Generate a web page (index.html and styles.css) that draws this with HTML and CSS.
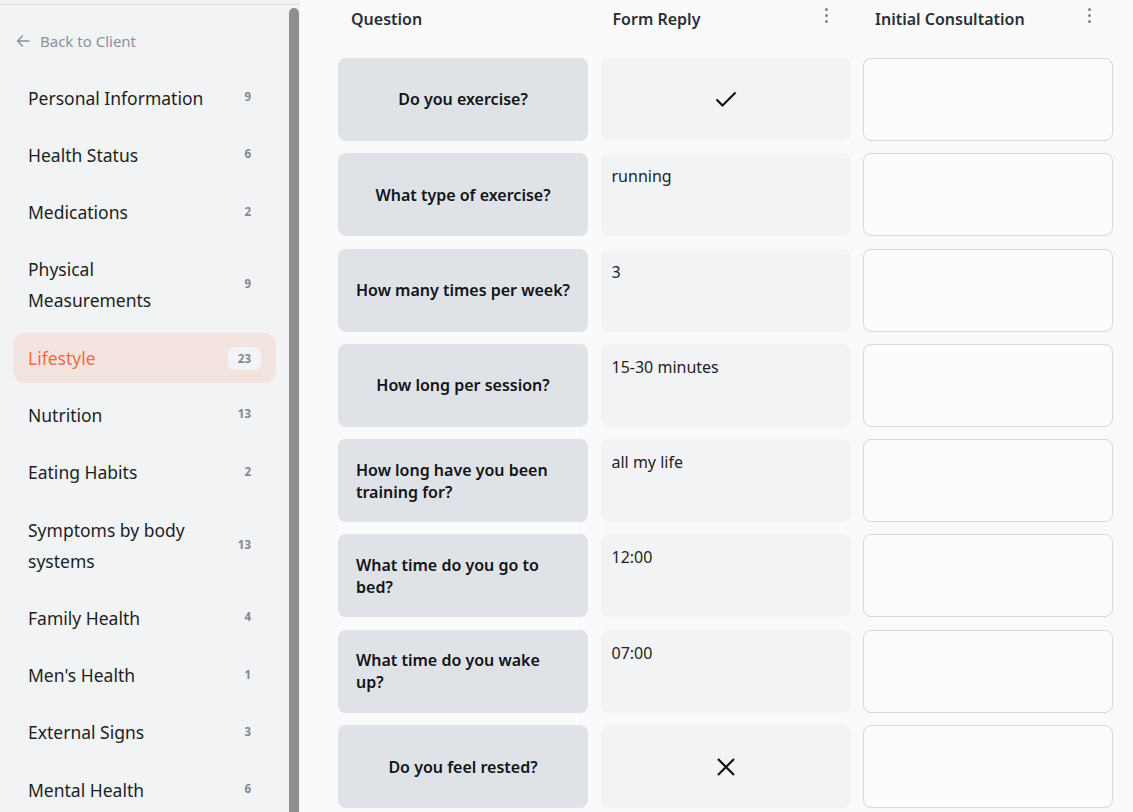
FILE: index.html
```html
<!DOCTYPE html>
<html>
  <head>
    <title>Lifestyle</title>
    <link rel="stylesheet" href="styles.css">
  </head>
  <body>
    <div class="page">
      <aside class="sidebar">
        <div class="sidebar-top"></div>
        <div class="sidebar-body">
          <nav class="nav">
            <a class="back" href="#">
              <svg width="14" height="12" viewBox="0 0 14 12"><path d="M13 6H1.5M6.5 1L1.5 6l5 5" fill="none" stroke="#8a919b" stroke-width="1.4" stroke-linecap="round" stroke-linejoin="round"/></svg>
              Back to Client
            </a>
            <ul class="menu">
              <li><span>Personal Information</span><b class="count">9</b></li>
              <li><span>Health Status</span><b class="count">6</b></li>
              <li><span>Medications</span><b class="count">2</b></li>
              <li><span>Physical<br>Measurements</span><b class="count">9</b></li>
              <li class="active"><span>Lifestyle</span><b class="count">23</b></li>
              <li><span>Nutrition</span><b class="count">13</b></li>
              <li><span>Eating Habits</span><b class="count">2</b></li>
              <li><span>Symptoms by body<br>systems</span><b class="count">13</b></li>
              <li><span>Family Health</span><b class="count">4</b></li>
              <li><span>Men's Health</span><b class="count">1</b></li>
              <li><span>External Signs</span><b class="count">3</b></li>
              <li><span>Mental Health</span><b class="count">6</b></li>
            </ul>
          </nav>
          <div class="scrolltrack"><div class="scrollthumb"></div></div>
        </div>
      </aside>

      <main class="main">
        <div class="grid">
          <div class="colhead">Question</div>
          <div class="colhead">Form Reply <span class="kebab"><i></i><i></i><i></i></span></div>
          <div class="colhead">Initial Consultation <span class="kebab"><i></i><i></i><i></i></span></div>

          <div class="question"><span>Do you exercise?</span></div>
          <div class="reply center">
            <svg width="24" height="18" viewBox="0 0 24 18"><path d="M2.5 9.5l6 6L21.5 2.5" fill="none" stroke="#111" stroke-width="2.2"/></svg>
          </div>
          <div class="consult"></div>

          <div class="question"><span>What type of exercise?</span></div>
          <div class="reply">running</div>
          <div class="consult"></div>

          <div class="question"><span>How many times per week?</span></div>
          <div class="reply">3</div>
          <div class="consult"></div>

          <div class="question"><span>How long per session?</span></div>
          <div class="reply">15-30 minutes</div>
          <div class="consult"></div>

          <div class="question"><span>How long have you been training for?</span></div>
          <div class="reply">all my life</div>
          <div class="consult"></div>

          <div class="question"><span>What time do you go to bed?</span></div>
          <div class="reply">12:00</div>
          <div class="consult"></div>

          <div class="question"><span>What time do you wake up?</span></div>
          <div class="reply">07:00</div>
          <div class="consult"></div>

          <div class="question"><span>Do you feel rested?</span></div>
          <div class="reply center">
            <svg width="20" height="20" viewBox="0 0 20 20"><path d="M2 2l16 16M18 2L2 18" fill="none" stroke="#111" stroke-width="2.2"/></svg>
          </div>
          <div class="consult"></div>
        </div>
      </main>
    </div>
  </body>
</html>
```

FILE: styles.css
```css
/* Primary layout components
------------------------------- */

html, body
{
  margin: 0;
  height: 100%;
  overflow: hidden;
}

body
{
  font-family: "Noto Sans", "Open Sans", sans-serif;
  background-color: #fafafa;
  color: #1b1f24;
}

.page
{
  display: flex;
  height: 812px;
}

.sidebar
{
  width: 300px;
  flex: none;
  background-color: #f2f3f5;
  display: flex;
  flex-direction: column;
}

.sidebar-top
{
  height: 4px;
  border-bottom: 1px solid #dde0e5;
  flex: none;
}

.sidebar-body
{
  display: flex;
  flex: 1;
  min-height: 0;
}

.nav
{
  flex: none;
  width: 263px;
  padding: 0 12px 0 13px;
}

.back
{
  display: flex;
  align-items: center;
  gap: 10px;
  margin: 26px 0 0 3px;
  height: 20px;
  font-size: 15px;
  line-height: 20px;
  color: #8a919b;
  text-decoration: none;
}

.menu
{
  list-style: none;
  margin: 22px 0 0 0;
  padding: 0;
  display: flex;
  flex-direction: column;
  gap: 7.3px;
}

.menu li
{
  display: flex;
  align-items: center;
  justify-content: space-between;
  padding: 9.5px 15px;
  font-size: 17.5px;
  line-height: 31px;
  border-radius: 12px;
}

.menu li.active
{
  background-color: #f4e4e0;
  color: #f26a3d;
}

.count
{
  font-size: 11.5px;
  font-weight: bold;
  line-height: 15px;
  padding: 4px 10px;
  margin-top: -3px;
  border-radius: 7px;
  color: #7f8793;
}

.active .count
{
  background-color: #f3f4f6;
  margin-top: 0;
}

.scrolltrack
{
  flex: none;
  width: 10px;
  padding: 3px 1px 0 1px;
}

.scrollthumb
{
  width: 10px;
  height: 100%;
  background-color: #8f8f8f;
  border-radius: 5px 5px 0 0;
}

/* table of answers
------------------------------- */

.main
{
  flex: 1;
  padding: 0 20px 0 38px;
}

.grid
{
  display: grid;
  grid-template-columns: repeat(3, 250px);
  grid-template-rows: 45.7px;
  grid-auto-rows: 83px;
  column-gap: 12.5px;
  row-gap: 12.3px;
}

.colhead
{
  align-self: start;
  height: 38px;
  display: flex;
  align-items: center;
  justify-content: space-between;
  padding: 0 22.5px 0 12px;
  font-size: 16px;
  font-weight: 600;
  color: #2b2f36;
}

.colhead:first-child
{
  padding-left: 13px;
}

.kebab
{
  display: flex;
  flex-direction: column;
  gap: 3px;
  margin-top: -7px;
}

.kebab i
{
  display: block;
  width: 3px;
  height: 3px;
  border-radius: 50%;
  background-color: #7d8590;
}

.question
{
  display: flex;
  align-items: center;
  justify-content: center;
  padding: 0 18px;
  background-color: #dfe2e6;
  border-radius: 8px;
  font-size: 16px;
  font-weight: 600;
  line-height: 22px;
  color: #111418;
}

.reply
{
  background-color: #f2f3f5;
  border-radius: 8px;
  padding: 12px 11px;
  font-size: 16px;
  line-height: 22px;
  color: #1f2328;
}

.reply.center
{
  display: flex;
  align-items: center;
  justify-content: center;
  padding: 0;
}

.consult
{
  background-color: #fcfcfc;
  border: 1px solid #d5d8dd;
  border-radius: 8px;
}
```
